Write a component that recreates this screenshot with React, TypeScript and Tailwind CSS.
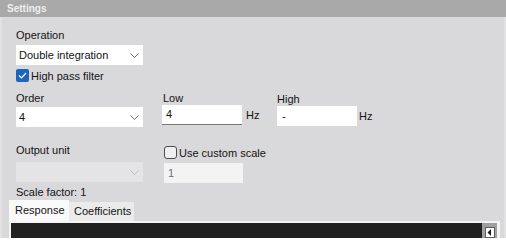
import React from 'react';

const font = { fontFamily: '"Liberation Sans", Arial, sans-serif' };

function Chevron({ disabled = false }: { disabled?: boolean }) {
  return (
    <svg width="9" height="5" viewBox="0 0 9 5" className="shrink-0">
      <polyline
        points="0.5,0.5 4.5,4.5 8.5,0.5"
        fill="none"
        stroke={disabled ? '#bdbdbf' : '#6e6e6e'}
        strokeWidth="1"
      />
    </svg>
  );
}

function Combo({ value, disabled = false }: { value?: string; disabled?: boolean }) {
  return (
    <div
      className={`flex h-[20px] w-[127px] items-center justify-between pl-[3px] pr-[4px] ${
        disabled ? 'bg-[#e4e3e5]' : 'bg-white'
      }`}
    >
      <span className="leading-[13px]">{value}</span>
      <Chevron disabled={disabled} />
    </div>
  );
}

function Check({ checked }: { checked: boolean }) {
  if (checked) {
    return (
      <div className="flex h-[13px] w-[13px] items-center justify-center rounded-[2px] bg-[#1d64be]">
        <svg width="9" height="7" viewBox="0 0 9 7">
          <polyline points="1,3.5 3.5,6 8,1" fill="none" stroke="#ffffff" strokeWidth="1.2" />
        </svg>
      </div>
    );
  }
  return <div className="h-[13px] w-[13px] rounded-[3px] border border-[#4b4b4b] bg-[#efefef]" />;
}

export default function App() {
  return (
    <div className="flex h-[238px] w-[506px] flex-col overflow-hidden bg-[#d9d8da] text-[11px] text-[#141414]" style={font}>
      {/* Header */}
      <div className="flex h-[17px] shrink-0 items-center bg-[#a9a9a9] pl-[7px] pr-[2px]">
        <span className="text-[10px] font-bold leading-[13px] text-[#eeeeee]">Settings</span>
      </div>

      <div className="flex flex-1 flex-col border-x-2 border-[#e2e2e2] pl-[14px]">
        {/* Operation */}
        <div className="mt-[12px] h-[13px] leading-[13px]">Operation</div>
        <div className="mt-[3px]">
          <Combo value="Double integration" />
        </div>
        <div className="mt-[4px] flex items-start gap-[2px]">
          <Check checked />
          <span className="mt-[1px] leading-[13px]">High pass filter</span>
        </div>

        {/* Order / Low / High */}
        <div className="mt-[9px] flex">
          <div className="w-[146px]">
            <div className="h-[13px] leading-[13px]">Order</div>
            <div className="mt-[2px]">
              <Combo value="4" />
            </div>
          </div>
          <div className="w-[115px]">
            <div className="ml-[1px] h-[13px] leading-[13px]">Low</div>
            <div className="flex items-center gap-[4px]">
              <div className="flex h-[20px] w-[80px] items-center border-b border-[#7a7a7a] bg-white pl-[4px] leading-[13px]">4</div>
              <span className="leading-[13px]">Hz</span>
            </div>
          </div>
          <div className="mt-[1px]">
            <div className="h-[13px] leading-[13px]">High</div>
            <div className="flex items-center gap-[2px]">
              <div className="flex h-[20px] w-[80px] items-center bg-white pl-[5px] leading-[13px]">-</div>
              <span className="leading-[13px]">Hz</span>
            </div>
          </div>
        </div>

        {/* Output unit / custom scale */}
        <div className="mt-[17px] flex">
          <div className="w-[148px]">
            <div className="h-[13px] leading-[13px]">Output unit</div>
            <div className="mt-[5px]">
              <Combo disabled />
            </div>
          </div>
          <div>
            <div className="mt-[2px] flex items-start gap-[2px]">
              <Check checked={false} />
              <span className="mt-[1px] leading-[13px]">Use custom scale</span>
            </div>
            <div className="mt-[3px] flex h-[20px] w-[79px] items-center bg-[#f3f3f4] pl-[4px] leading-[13px] text-[#6c6c82]">1</div>
          </div>
        </div>

        <div className="mt-[3px] h-[13px] leading-[13px]">Scale factor: 1</div>

        {/* Tabs */}
        <div className="-ml-[7px] mt-[1px] flex items-end">
          <div className="h-[21px] w-[60px] bg-[#f9f9f9] pl-[6px] pt-[4px] leading-[13px]">Response</div>
          <div className="h-[19px] w-[65px] bg-[#ebebeb] pl-[5px] pt-[3px] leading-[13px]">Coefficients</div>
        </div>
        <div className="-ml-[7px] mr-[4px] flex flex-1 border-l-2 border-r-[3px] border-t-2 border-[#f4f4f4]">
          <div className="flex-1 bg-[#202020]" />
          <div className="flex w-[15px] justify-center bg-[#a0a0a0] pt-[4px]">
            <div className="flex h-[11px] w-[10px] items-center justify-center border border-[#5c5c5c] bg-white">
              <svg width="5" height="7" viewBox="0 0 5 7">
                <polygon points="4,0 4,7 0.5,3.5" fill="#1a1a1a" />
              </svg>
            </div>
          </div>
        </div>
      </div>
    </div>
  );
}
